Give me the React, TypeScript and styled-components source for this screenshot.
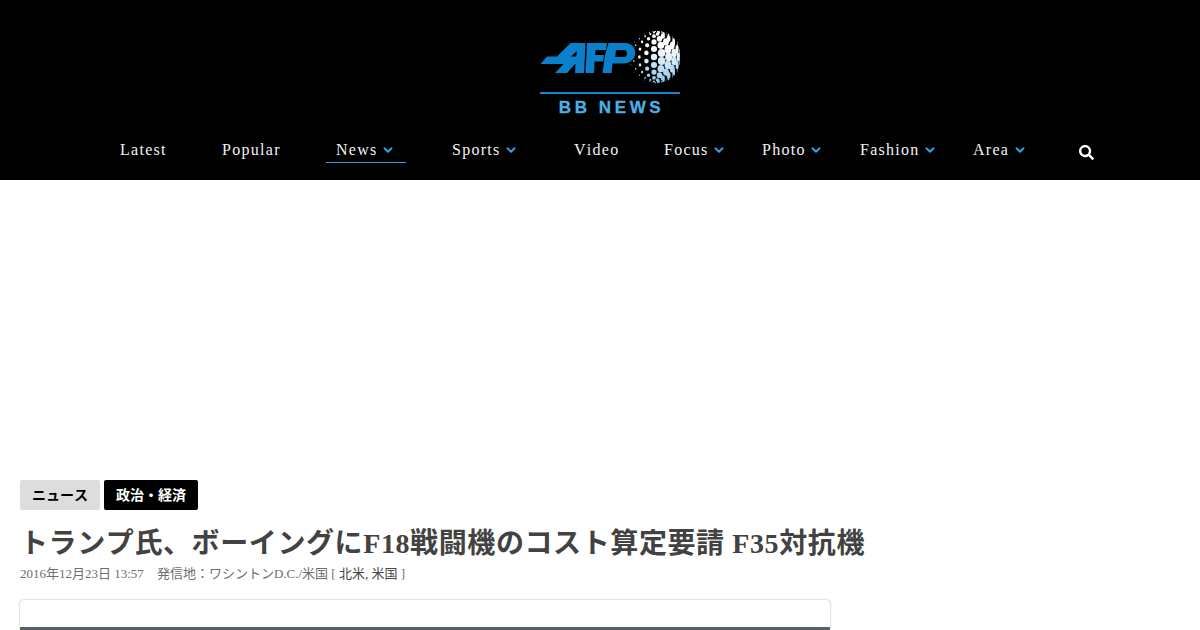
import React from 'react';
import styled, { createGlobalStyle } from 'styled-components';
import { ChevronDown } from 'lucide-react';
import { FaSearch } from 'react-icons/fa';

const GlobalStyle = createGlobalStyle`
  html, body {
    margin: 0;
    padding: 0;
    background: #fff;
    overflow: hidden;
  }
  body {
    font-family: "Liberation Serif", "Noto Sans CJK JP", serif;
    font-kerning: none;
  }
`;

const Header = styled.header`
  height: 180px;
  background: #000;
  display: flex;
  flex-direction: column;
  align-items: center;
`;

const LogoLink = styled.a`
  display: flex;
  flex-direction: column;
  align-items: center;
  width: 140px;
  height: 85px;
  margin: 30px 0 0 20px;
`;

const LogoMark = styled.svg`
  display: block;
  width: 140px;
  height: 64px;
  flex-shrink: 0;
`;

const LogoCaption = styled.span`
  font-family: "Liberation Sans", Arial, sans-serif;
  font-size: 17px;
  font-weight: 700;
  line-height: 18px;
  letter-spacing: 3.6px;
  color: #4bb0e6;
  -webkit-text-stroke: 0.3px #4bb0e6;
  margin: 5px 0 0 3px;
  white-space: nowrap;
`;

const Nav = styled.nav`
  align-self: stretch;
  display: flex;
  align-items: flex-start;
  padding-left: 110px;
  margin-top: 23px;
`;

const NavItem = styled.a<{ $width: number }>`
  flex: 0 0 ${props => props.$width}px;
  display: flex;
`;

const NavLabel = styled.span<{ $active?: boolean }>`
  display: flex;
  align-items: center;
  box-sizing: content-box;
  height: 24px;
  padding: 0 10px;
  width: ${props => (props.$active ? '60px' : 'auto')};
  font-size: 16px;
  letter-spacing: 1.28px;
  color: #f2f2f2;
  border-bottom: 1px solid ${props => (props.$active ? '#2f9fd8' : 'transparent')};
  white-space: nowrap;
`;

const Chevron = styled(ChevronDown)`
  color: #2ea6e0;
  margin-left: 3.5px;
  flex-shrink: 0;
`;

const SearchButton = styled.button`
  margin: 7px 0 0 10px;
  padding: 0;
  border: 0;
  background: none;
  color: #fff;
  display: flex;
`;

const AdSlot = styled.div`
  height: 300px;
`;

const Main = styled.main`
  padding: 0 20px;
`;

const TagRow = styled.div`
  display: flex;
  gap: 4px;
`;

const Tag = styled.a<{ $dark?: boolean }>`
  display: flex;
  align-items: center;
  height: 30px;
  padding: 0 12px 2px;
  box-sizing: border-box;
  border-radius: 2px;
  font-family: "Liberation Sans", "Noto Sans CJK JP", sans-serif;
  font-size: 14px;
  font-weight: 700;
  background: ${props => (props.$dark ? '#000' : '#ddd')};
  color: ${props => (props.$dark ? '#fff' : '#000')};
`;

const Title = styled.h1`
  margin: 16px 0 0;
  font-size: 28px;
  line-height: 36px;
  font-weight: 700;
  letter-spacing: 0.6px;
  color: #424242;
  white-space: nowrap;
`;

const Meta = styled.p`
  margin: 2px 0 0;
  font-size: 13px;
  line-height: 20px;
  color: #6e6e6e;
  white-space: nowrap;
`;

const MetaDate = styled.span`
  margin-right: 13px;
`;

const MetaArea = styled.span`
  color: #444;
`;

const Card = styled.div`
  width: 810px;
  height: 30px;
  margin-top: 16px;
  padding-top: 27px;
  box-sizing: border-box;
  border-radius: 4px;
  box-shadow: 0 0 2px rgba(0, 0, 0, 0.4);
`;

const CardPhoto = styled.div`
  height: 100%;
  background: #5a606b;
`;

const navItems = [
  { label: 'Latest', width: 102 },
  { label: 'Popular', width: 114 },
  { label: 'News', width: 116, menu: true, active: true },
  { label: 'Sports', width: 122, menu: true },
  { label: 'Video', width: 90 },
  { label: 'Focus', width: 98, menu: true },
  { label: 'Photo', width: 98, menu: true },
  { label: 'Fashion', width: 113, menu: true },
  { label: 'Area', width: 106, menu: true },
];

// halftone globe: dots swell to the right until only small holes are left
const GLOBE = { x: 114, y: 27, r: 26 };
const globeDots: { x: number; y: number; rx: number; ry: number; fill: string }[] = [];
for (let col = -5; col <= 5; col++) {
  for (let row = -6; row <= 6; row++) {
    const lon = col * 0.3;
    const lat = (row + (col % 2 ? 0.5 : 0)) * 0.31;
    if (Math.abs(lat) > 1.5) continue;
    const size = Math.min(4.4, 0.5 + 2.7 * (1 + Math.sin(lon)));
    const y = GLOBE.y + GLOBE.r * Math.sin(lat);
    const blue = Math.max(0, Math.min(1, (y - 18) / 34));
    globeDots.push({
      x: GLOBE.x + GLOBE.r * Math.cos(lat) * Math.sin(lon),
      y,
      rx: size * Math.cos(lon) * Math.cos(lat),
      ry: size * Math.cos(lat),
      fill: `rgb(${Math.round(255 - 115 * blue)}, ${Math.round(255 - 57 * blue)}, ${Math.round(255 - 21 * blue)})`,
    });
  }
}

const Logo: React.FC = () => (
  <LogoMark viewBox="0 0 140 64">
    {globeDots.map((dot, i) => (
      <ellipse key={i} cx={dot.x} cy={dot.y} rx={dot.rx} ry={dot.ry} fill={dot.fill} />
    ))}
    <g fill="#0a80cb" fillRule="evenodd">
      <path d="M0.5 34 L7 26.5 L17 26.5 L30.5 13 L45.5 13 L44 43 L35 43 L35.5 34 L35 34 L27 43 L15 43 L23.5 34 Z M31 26.5 L36.4 26.5 L36.9 21 Z" />
      <path d="M47 13 L67 13 L66 20 L55.5 20 L55 25 L64 25 L63 31.5 L54.5 31.5 L54 43 L45.5 43 Z" />
      <path d="M68.5 13 L85 13 C99 13 99 33.5 83 33.5 L72.5 33.5 L71.5 43 L62.5 43 L65 25 Z M76 20 L75.2 27 L84 27 C88 27 88 20 84 20 Z" />
    </g>
    <rect x="0" y="62" width="140" height="2" fill="#1487cf" />
  </LogoMark>
);

const App: React.FC = () => (
  <>
    <GlobalStyle />
    <Header>
      <LogoLink>
        <Logo />
        <LogoCaption>BB NEWS</LogoCaption>
      </LogoLink>
      <Nav>
        {navItems.map(item => (
          <NavItem key={item.label} $width={item.width}>
            <NavLabel $active={item.active}>
              {item.label}
              {item.menu && <Chevron size={14} strokeWidth={3.2} />}
            </NavLabel>
          </NavItem>
        ))}
        <SearchButton>
          <FaSearch size={15} />
        </SearchButton>
      </Nav>
    </Header>
    <AdSlot />
    <Main>
      <TagRow>
        <Tag>ニュース</Tag>
        <Tag $dark>政治・経済</Tag>
      </TagRow>
      <Title>トランプ氏、ボーイングにF18戦闘機のコスト算定要請 F35対抗機</Title>
      <Meta>
        <MetaDate>2016年12月23日 13:57</MetaDate>
        発信地：ワシントンD.C./米国 [ <MetaArea>北米, 米国</MetaArea> ]
      </Meta>
      <Card>
        <CardPhoto />
      </Card>
    </Main>
  </>
);

export default App;
